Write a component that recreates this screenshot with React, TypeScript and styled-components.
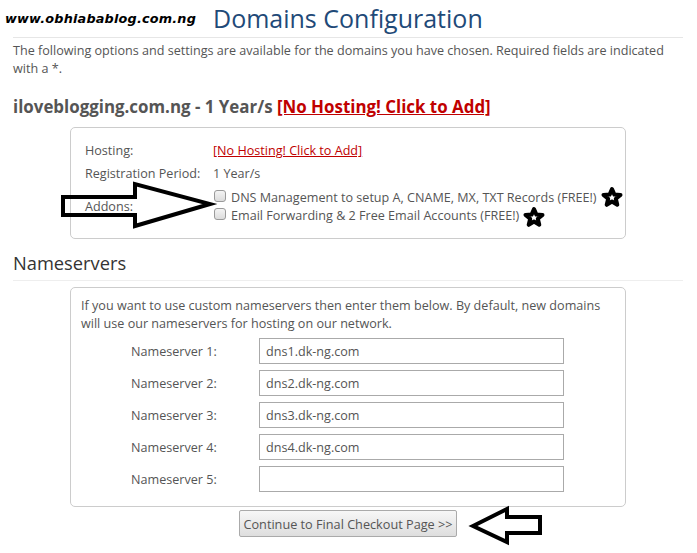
import styled, { createGlobalStyle } from "styled-components";

const GlobalStyle = createGlobalStyle`
  body {
    margin: 0;
    background: #fff;
    font-family: "Open Sans", "DejaVu Sans", sans-serif;
    font-size: 12.6px;
    color: #555;
  }
`;

const Page = styled.div`
  position: relative;
  width: 697px;
  min-height: 553px;
  padding: 0 14px 0 13px;
  box-sizing: border-box;
`;

const Header = styled.div`
  display: flex;
  align-items: flex-end;
  height: 37px;
  border-bottom: 1px solid #e6e6e6;
`;

const SiteMark = styled.span`
  font-family: "DejaVu Sans", sans-serif;
  font-weight: bold;
  font-style: italic;
  font-size: 12.8px;
  color: #000;
  margin: 0 17px 11px -8px;
  letter-spacing: 0.2px;
`;

const Title = styled.h1`
  margin: 0 0 4px 0;
  font-weight: normal;
  font-size: 25px;
  line-height: 30px;
  color: #1f4a78;
`;

const Intro = styled.p`
  margin: 4px 0 0;
  line-height: 18px;
`;

const DomainTitle = styled.h2`
  margin: 18px 0 0;
  font-size: 16.9px;
  line-height: 22px;
  font-weight: bold;
  color: #555;
`;

const RedLink = styled.a<{ $light?: boolean }>`
  color: #c00000;
  text-decoration: underline;
  font-weight: ${(p) => (p.$light ? "normal" : "bold")};
`;

const Box = styled.div<{ $pad: string; $top: number }>`
  width: 556px;
  margin: ${(p) => p.$top}px auto 0;
  box-sizing: border-box;
  border: 1px solid #ccc;
  border-radius: 5px;
  padding: ${(p) => p.$pad};
`;

const InfoGrid = styled.div`
  display: grid;
  grid-template-columns: 128px 1fr;
  align-items: center;
  row-gap: 5px;
`;

const Label = styled.div`
  line-height: 18px;
`;

const Addons = styled.div`
  display: flex;
  flex-direction: column;
  margin-top: 1px;
`;

const AddonRow = styled.label`
  display: flex;
  align-items: center;
  line-height: 18px;
`;

const Check = styled.span`
  display: inline-block;
  width: 10px;
  height: 10px;
  border: 1px solid #9a9a9a;
  border-radius: 3px;
  background: linear-gradient(#f4f4f4, #dcdcdc);
  margin: 0 5px 0 1px;
  position: relative;
  top: -2px;
`;

const SectionTitle = styled.h3`
  margin: 11px 0 0;
  padding-bottom: 4px;
  border-bottom: 1px solid #eee;
  font-weight: normal;
  font-size: 18.3px;
  line-height: 26px;
  color: #333;
`;

const Note = styled.p`
  margin: 0 0 5px;
  line-height: 18px;
`;

const NsRow = styled.div`
  display: grid;
  grid-template-columns: 178px 305px;
  align-items: center;
  margin-bottom: 6px;
`;

const NsLabel = styled.label`
  padding-left: 50px;
`;

const NsInput = styled.input`
  height: 26px;
  box-sizing: border-box;
  border: 1px solid #aaa;
  padding: 0 6px;
  font-family: "Open Sans", "DejaVu Sans", sans-serif;
  font-size: 12.6px;
  color: #555;
  outline: none;
`;

const Actions = styled.div`
  display: flex;
  justify-content: center;
  margin-top: 3px;
`;

const Submit = styled.button`
  height: 27px;
  padding: 0 3px;
  border: 1px solid #aaa;
  border-radius: 2px;
  background: linear-gradient(#f7f7f7, #dedede);
  font-family: "Open Sans", "DejaVu Sans", sans-serif;
  font-size: 12.7px;
  color: #555;
`;

const Mark = styled.svg`
  position: absolute;
  overflow: visible;
`;

const nameservers = [
  "dns1.dk-ng.com",
  "dns2.dk-ng.com",
  "dns3.dk-ng.com",
  "dns4.dk-ng.com",
  "",
];

function Star({ x, y }: { x: number; y: number }) {
  return (
    <Mark width="20" height="20" style={{ left: x, top: y }}>
      <polygon
        points="10,2 12.4,7.6 18.5,7.9 13.8,11.8 15.3,17.8 10,14.5 4.7,17.8 6.2,11.8 1.5,7.9 7.6,7.6"
        fill="#fff"
        stroke="#000"
        strokeWidth="4"
        strokeLinejoin="round"
      />
    </Mark>
  );
}

export default function App() {
  return (
    <>
      <GlobalStyle />
      <Page>
        <Header>
          <SiteMark>www.obhiabablog.com.ng</SiteMark>
          <Title>Domains Configuration</Title>
        </Header>
        <Intro>
          The following options and settings are available for the domains you have chosen. Required fields are indicated
          with a *.
        </Intro>

        <DomainTitle>
          iloveblogging.com.ng - 1 Year/s <RedLink href="#">[No Hosting! Click to Add]</RedLink>
        </DomainTitle>
        <Box $pad="14px 14px 13px 14px" $top={9}>
          <InfoGrid>
            <Label>Hosting:</Label>
            <Label>
              <RedLink href="#" $light>
                [No Hosting! Click to Add]
              </RedLink>
            </Label>
            <Label>Registration Period:</Label>
            <Label>1 Year/s</Label>
            <Label>Addons:</Label>
            <Addons>
              <AddonRow>
                <Check />
                DNS Management to setup A, CNAME, MX, TXT Records (FREE!)
              </AddonRow>
              <AddonRow>
                <Check />
                Email Forwarding &amp; 2 Free Email Accounts (FREE!)
              </AddonRow>
            </Addons>
          </InfoGrid>
        </Box>

        <SectionTitle>Nameservers</SectionTitle>
        <Box $pad="9px 10px 8px 10px" $top={6}>
          <Note>
            If you want to use custom nameservers then enter them below. By default, new domains will use our
            nameservers for hosting on our network.
          </Note>
          {nameservers.map((ns, i) => (
            <NsRow key={i}>
              <NsLabel>Nameserver {i + 1}:</NsLabel>
              <NsInput defaultValue={ns} />
            </NsRow>
          ))}
        </Box>
        <Actions>
          <Submit>Continue to Final Checkout Page &gt;&gt;</Submit>
        </Actions>

        {/* hand-drawn pointers */}
        <Mark width="160" height="50" style={{ left: 60, top: 181 }}>
          <polygon
            points="3,16 75,16 75,3 150,23 75,45 75,34 3,34"
            fill="none"
            stroke="#000"
            strokeWidth="4"
            strokeLinejoin="miter"
          />
        </Mark>
        <Star x={602} y={187} />
        <Star x={524} y={207} />
        <Mark width="75" height="40" style={{ left: 470, top: 506 }}>
          <polygon
            points="3,20 37,3 37,11 70,11 70,27 37,27 37,36"
            fill="none"
            stroke="#000"
            strokeWidth="4"
          />
        </Mark>
      </Page>
    </>
  );
}
